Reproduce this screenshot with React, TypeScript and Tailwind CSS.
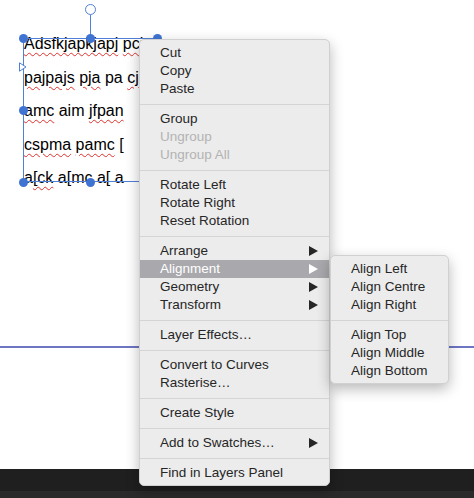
import type { ReactNode } from 'react';

type Item = { label: string; disabled?: boolean; sub?: boolean; active?: boolean } | 'sep';

const mainMenu: Item[] = [
  { label: 'Cut' }, { label: 'Copy' }, { label: 'Paste' }, 'sep',
  { label: 'Group' }, { label: 'Ungroup', disabled: true }, { label: 'Ungroup All', disabled: true }, 'sep',
  { label: 'Rotate Left' }, { label: 'Rotate Right' }, { label: 'Reset Rotation' }, 'sep',
  { label: 'Arrange', sub: true }, { label: 'Alignment', sub: true, active: true }, { label: 'Geometry', sub: true }, { label: 'Transform', sub: true }, 'sep',
  { label: 'Layer Effects…' }, 'sep',
  { label: 'Convert to Curves' }, { label: 'Rasterise…' }, 'sep',
  { label: 'Create Style' }, 'sep',
  { label: 'Add to Swatches…', sub: true }, 'sep',
  { label: 'Find in Layers Panel' },
];

const alignMenu: Item[] = [
  { label: 'Align Left' }, { label: 'Align Centre' }, { label: 'Align Right' }, 'sep',
  { label: 'Align Top' }, { label: 'Align Middle' }, { label: 'Align Bottom' },
];

function Arrow({ active }: { active?: boolean }) {
  return (
    <svg width="9" height="10" viewBox="0 0 9 10" className="mr-[11px]">
      <path d="M0 0 L9 5 L0 10 Z" fill={active ? '#ffffff' : '#262626'} />
    </svg>
  );
}

function MenuList({ items }: { items: Item[] }) {
  return (
    <>
      {items.map((it, i) =>
        it === 'sep' ? (
          <div key={i} className="h-[12px] flex items-center">
            <div className="h-px w-full bg-[#d4d4d4]" />
          </div>
        ) : (
          <div
            key={i}
            className={`h-[18px] flex items-center justify-between pl-[20px] leading-[18px] ${
              it.active ? 'bg-[#a9a9ad] text-white' : it.disabled ? 'text-[#b3b3b3]' : 'text-[#262626]'
            }`}
          >
            <span>{it.label}</span>
            {it.sub && <Arrow active={it.active} />}
          </div>
        )
      )}
    </>
  );
}

function Typo({ children }: { children: ReactNode }) {
  return (
    <span className="underline decoration-wavy decoration-[#e0312b] decoration-1 underline-offset-[3px]">{children}</span>
  );
}

function Handle({ x, y }: { x: number; y: number }) {
  return (
    <div
      className="absolute w-[9px] h-[9px] rounded-full bg-[#3f74d2]"
      style={{ left: x - 4.5, top: y - 4.5 }}
    />
  );
}

export default function App() {
  return (
    <div className="relative w-[474px] h-[498px] bg-white overflow-hidden" style={{ fontFamily: '"Liberation Sans", Arial, sans-serif' }}>
      {/* canvas guide line */}
      <div className="absolute left-0 right-0 top-[346px] h-[1.5px] bg-[#6e76c4]" />

      {/* bottom dark panel */}
      <div className="absolute left-0 right-0 bottom-0 h-[29px] flex flex-col">
        <div className="flex-1 bg-[#1f1f1f]" />
        <div className="h-[7px] bg-[#2a2a2a]" />
      </div>

      {/* text frame */}
      <div className="absolute left-[24px] top-[27px] text-[16px] leading-[33.5px] text-black whitespace-nowrap">
        <div><Typo>Adsfkjapkjapj</Typo> <Typo>pcj</Typo></div>
        <div><Typo>pajpajs</Typo> <Typo>pja</Typo> pa <Typo>cj</Typo></div>
        <div><Typo>amc</Typo> aim <Typo>jfpan</Typo></div>
        <div><Typo>cspma</Typo> <Typo>pamc</Typo> [</div>
        <div>a<Typo>[ck</Typo> a[mc a[ a</div>
      </div>
      <div className="absolute left-[23px] top-[38px] w-[134px] h-[144px] border border-[#4f7fd6]" />
      <div className="absolute left-[90px] top-[15px] w-px h-[23px] bg-[#4f7fd6]" />
      <div className="absolute left-[84.5px] top-[3.5px] w-[11px] h-[11px] rounded-full border border-[#4f7fd6] bg-white" />
      <svg className="absolute left-[19px] top-[62px]" width="8" height="10" viewBox="0 0 8 10">
        <path d="M0.5 0.8 L7 5 L0.5 9.2 Z" fill="white" stroke="#4f7fd6" strokeWidth="1" />
      </svg>
      <Handle x={23} y={38} />
      <Handle x={90} y={38} />
      <Handle x={157} y={38} />
      <Handle x={23} y={110} />
      <Handle x={23} y={182} />
      <Handle x={90} y={182} />

      {/* context menu */}
      <div className="absolute left-[139px] top-[39px] w-[191px] pt-[4px] pb-[3px] rounded-[5px] bg-[#ececec] border border-[#d0d0d0] shadow-[0_5px_14px_rgba(0,0,0,0.28)] text-[13.5px]">
        <MenuList items={mainMenu} />
      </div>

      {/* submenu */}
      <div className="absolute left-[330px] top-[255px] w-[119px] pt-[4px] pb-[3px] rounded-[5px] bg-[#ececec] border border-[#d0d0d0] shadow-[0_5px_14px_rgba(0,0,0,0.28)] text-[13.5px]">
        <MenuList items={alignMenu} />
      </div>
    </div>
  );
}
